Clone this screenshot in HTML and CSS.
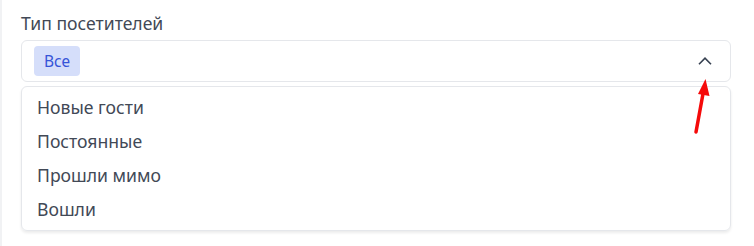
FILE: index.html
```html
<!DOCTYPE html>
<html lang="ru">

<head>
    <meta charset="UTF-8">
    <meta name="viewport" content="width=device-width, initial-scale=1.0">
    <title>Тип посетителей</title>

    <link rel="stylesheet" href="styles.css">
</head>

<body>

    <div class="field">
        <label class="label">Тип посетителей</label>
        <div class="select">
            <span class="chip">Все</span>
            <svg class="chevron" width="14" height="8" viewBox="0 0 14 8">
                <path d="M1 7.2 L7 1.2 L13 7.2" fill="none" stroke="#374151" stroke-width="1.6" />
            </svg>
        </div>
        <ul class="menu">
            <li>Новые гости</li>
            <li>Постоянные</li>
            <li>Прошли мимо</li>
            <li>Вошли</li>
        </ul>

        <!-- annotation arrow -->
        <svg class="arrow" width="30" height="60" viewBox="0 0 30 60">
            <path d="M8 55 L15.5 14" stroke="#f50a0a" stroke-width="3.5" stroke-linecap="round" />
            <path d="M17.5 2 L10 17 L21.5 19 Z" fill="#f50a0a" />
        </svg>
    </div>

</body>

</html>
```

FILE: styles.css
```css
body {
    margin: 0;
    height: 246px;
    background: #fff;
    font-family: "Noto Sans", sans-serif;
    color: #424956;
    border-left: 2px solid #f1f2f4;
}

.field {
    position: relative;
    padding: 11px 23px 0 19px;
}

.label {
    display: block;
    font-size: 17.6px;
    line-height: 24px;
    margin-bottom: 5px;
}

.select {
    display: flex;
    align-items: center;
    justify-content: space-between;
    height: 40px;
    padding: 0 18px 0 12px;
    border: 1px solid #e5e7eb;
    border-radius: 6px;
}

.chip {
    display: inline-block;
    padding: 0 10px;
    height: 30px;
    line-height: 30px;
    border-radius: 4px;
    background-color: #d5defa;
    color: #3654d8;
    font-size: 15.5px;
}

.chevron {
    display: block;
}

.menu {
    list-style: none;
    margin: 4px 0 0;
    padding: 3px 0 4px;
    border: 1px solid #e5e7eb;
    border-radius: 6px;
    box-shadow: 0 2px 3px rgba(0, 0, 0, 0.08);
}

.menu li {
    padding: 0 15px;
    height: 34px;
    line-height: 34px;
    font-size: 17.6px;
}

.arrow {
    position: absolute;
    left: 686px;
    top: 77px;
}
```
